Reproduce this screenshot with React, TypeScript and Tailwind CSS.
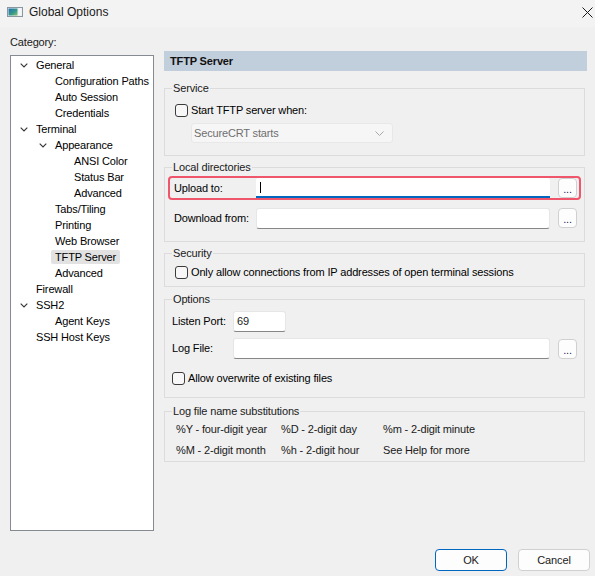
import React from 'react'

const tree = [
  { label: 'General', level: 0, open: true },
  { label: 'Configuration Paths', level: 1 },
  { label: 'Auto Session', level: 1 },
  { label: 'Credentials', level: 1 },
  { label: 'Terminal', level: 0, open: true },
  { label: 'Appearance', level: 1, open: true },
  { label: 'ANSI Color', level: 2 },
  { label: 'Status Bar', level: 2 },
  { label: 'Advanced', level: 2 },
  { label: 'Tabs/Tiling', level: 1 },
  { label: 'Printing', level: 1 },
  { label: 'Web Browser', level: 1 },
  { label: 'TFTP Server', level: 1, selected: true },
  { label: 'Advanced', level: 1 },
  { label: 'Firewall', level: 0 },
  { label: 'SSH2', level: 0, open: true },
  { label: 'Agent Keys', level: 1 },
  { label: 'SSH Host Keys', level: 0 },
]

const indent = ['pl-[0px]', 'pl-[19px]', 'pl-[38px]']

function Chevron() {
  return (
    <svg width="8" height="5" viewBox="0 0 8 5">
      <path d="M0.7 0.7 L4 4 L7.3 0.7" fill="none" stroke="#333" strokeWidth="1.1" />
    </svg>
  )
}

function Checkbox() {
  return <span className="w-[13px] h-[13px] rounded-[3px] border border-[#3b3b3b] bg-[#f7f7f7] shrink-0" />
}

function TextBox({ w, children }: { w: string; children?: React.ReactNode }) {
  return (
    <div className={`${w} h-[21px] bg-white border border-[#e6e6e6] border-b-[#868686] rounded-[3px] flex items-center px-[3px] text-[#1a1a1a]`}>
      {children}
    </div>
  )
}

function Browse() {
  return (
    <div className="w-[19px] h-[20px] ml-[8px] bg-[#fdfdfd] border border-[#d0d0d0] rounded-[4px] flex items-end justify-center pb-[4px] text-[#1a1a60] leading-[8px] text-[11px]">
      ...
    </div>
  )
}

function Group({ title, h, mt, children }: { title: string; h: string; mt: string; children: React.ReactNode }) {
  return (
    <fieldset className={`${h} ${mt} w-[421px] border border-[#dcdcdc]`}>
      <legend className="ml-[7px] px-[1px] leading-[15px] text-[#1a1a1a]">{title}</legend>
      {children}
    </fieldset>
  )
}

export default function App() {
  return (
    <div className="w-[595px] h-[576px] bg-[#f0f0f0] flex flex-col overflow-hidden font-['Liberation_Sans',Arial,sans-serif] text-[11px] tracking-[-0.15px] text-black">
      {/* barra de titulo */}
      <div className="h-[27px] bg-[#f3f3f3] flex items-center shrink-0">
        <svg width="16" height="10" viewBox="0 0 16 10" className="ml-[7px] mt-[-3px]">
          <defs>
            <linearGradient id="ico" x1="0" y1="0" x2="1" y2="1">
              <stop offset="0" stopColor="#1f6fb0" />
              <stop offset="0.6" stopColor="#3a9a8a" />
              <stop offset="1" stopColor="#8cc46a" />
            </linearGradient>
          </defs>
          <rect x="0.5" y="0.5" width="15" height="9" fill="#e8eef3" stroke="#8a96a0" />
          <rect x="1.5" y="1.5" width="9" height="7" fill="url(#ico)" />
          <rect x="11.5" y="1.5" width="3" height="7" fill="#f4f7f9" />
        </svg>
        <span className="ml-[6px] text-[12px] tracking-normal text-[#1a1a1a] mt-[-3px]">Global Options</span>
        <svg width="11" height="11" viewBox="0 0 11 11" className="ml-auto mr-[2px] mt-[-3px]">
          <path d="M0.5 0.5 L10.5 10.5 M10.5 0.5 L0.5 10.5" stroke="#1a1a1a" strokeWidth="1" />
        </svg>
      </div>

      <div className="flex pl-[10px]">
        {/* arbol de categorias */}
        <div className="w-[144px] flex flex-col">
          <div className="mt-[8px] leading-[15px] text-[#1a1a1a]">Category:</div>
          <div className="mt-[5px] h-[476px] bg-white border border-[#868a92] pt-[1px]">
            {tree.map((t, i) => (
              <div key={i} className={`h-[16px] flex items-center ${indent[t.level]}`}>
                <span className="w-[25px] pl-[9px] flex items-center shrink-0">{t.open && <Chevron />}</span>
                <span className={`whitespace-nowrap leading-[14px] px-[4px] -ml-[4px] rounded-[2px] ${t.selected ? 'bg-[#e2e2e2]' : ''}`}>
                  {t.label}
                </span>
              </div>
            ))}
          </div>
        </div>

        {/* panel derecho */}
        <div className="ml-[10px] mt-[24px] w-[423px] flex flex-col">
          <div className="h-[20px] bg-[#c1cedb] flex items-center pl-[6px] font-bold text-[#111]">TFTP Server</div>

          <Group title="Service" h="h-[75px]" mt="mt-[10px]">
            <div className="pt-[6px] pl-[10px]">
              <div className="h-[16px] flex items-center gap-[3px]">
                <Checkbox />
                <span>Start TFTP server when:</span>
              </div>
              <div className="mt-[5px] ml-[16px] w-[202px] h-[20px] bg-[#f6f6f6] border border-[#e8e8e8] rounded-[3px] flex items-center pl-[2px] pr-[8px] text-[#6e6e6e]">
                <span>SecureCRT starts</span>
                <svg width="9" height="5" viewBox="0 0 9 5" className="ml-auto">
                  <path d="M0.5 0.5 L4.5 4.5 L8.5 0.5" fill="none" stroke="#a8a8a8" strokeWidth="1" />
                </svg>
              </div>
            </div>
          </Group>

          <Group title="Local directories" h="h-[82px]" mt="mt-[4px]">
            <div className="pt-[1px] pl-[3px]">
              <div className="w-[413px] h-[24px] border-2 border-[#f0566b] rounded-[4px] flex items-center">
                <span className="w-[86px] pl-[4px] shrink-0">Upload to:</span>
                <div className="w-[294px] h-[20px] bg-white border-b-2 border-[#0067c0] rounded-t-[3px] flex items-center pl-[4px]">
                  <span className="w-[1px] h-[11px] bg-black" />
                </div>
                <Browse />
              </div>
              <div className="mt-[6px] w-[413px] h-[24px] border-2 border-transparent flex items-center">
                <span className="w-[86px] pl-[4px] shrink-0">Download from:</span>
                <TextBox w="w-[294px]" />
                <Browse />
              </div>
            </div>
          </Group>

          <Group title="Security" h="h-[41px]" mt="mt-[4px]">
            <div className="pt-[3px] pl-[10px] h-[16px] box-content flex items-center gap-[3px]">
              <Checkbox />
              <span>Only allow connections from IP addresses of open terminal sessions</span>
            </div>
          </Group>

          <Group title="Options" h="h-[106px]" mt="mt-[5px]">
            <div className="pt-[4px] pl-[7px]">
              <div className="h-[21px] flex items-center">
                <span className="w-[61px] shrink-0">Listen Port:</span>
                <TextBox w="w-[53px]">69</TextBox>
              </div>
              <div className="mt-[6px] h-[21px] flex items-center">
                <span className="w-[61px] shrink-0">Log File:</span>
                <TextBox w="w-[317px]" />
                <Browse />
              </div>
              <div className="mt-[11px] h-[16px] flex items-center gap-[3px]">
                <Checkbox />
                <span>Allow overwrite of existing files</span>
              </div>
            </div>
          </Group>

          <Group title="Log file name substitutions" h="h-[58px]" mt="mt-[6px]">
            <div className="pt-[2px] pl-[11px] text-[#1a1a1a]">
              <div className="h-[16px] flex items-center">
                <span className="w-[105px]">%Y - four-digit year</span>
                <span className="w-[102px]">%D - 2-digit day</span>
                <span>%m - 2-digit minute</span>
              </div>
              <div className="mt-[5px] h-[16px] flex items-center">
                <span className="w-[105px]">%M - 2-digit month</span>
                <span className="w-[102px]">%h - 2-digit hour</span>
                <span>See Help for more</span>
              </div>
            </div>
          </Group>
        </div>
      </div>

      {/* botones */}
      <div className="mt-[18px] flex justify-end gap-[11px] pr-[5px]">
        <button className="w-[72px] h-[22px] bg-[#fdfdfd] border border-[#0067c0] rounded-[4px] text-[#1a1a1a]">OK</button>
        <button className="w-[72px] h-[22px] bg-[#fdfdfd] border border-[#d0d0d0] rounded-[4px] text-[#1a1a1a]">Cancel</button>
      </div>
    </div>
  )
}
